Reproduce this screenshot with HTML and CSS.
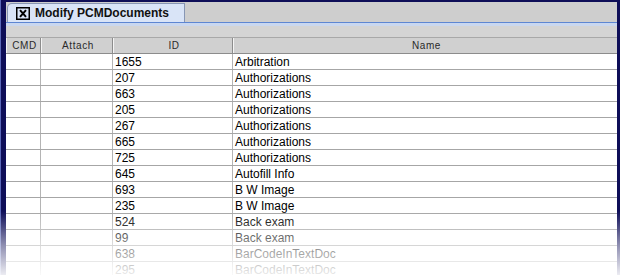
FILE: index.html
```html
<!DOCTYPE html>
<html>
<head>
    <title>Modify PCMDocuments</title>
    <link rel="stylesheet" href="styles.css">
</head>
<body>
    <div class="shot">
        <div class="window">
            <div class="tabstrip">
                <div class="tab">
                    <svg class="close" width="14" height="13" viewBox="0 0 14 13">
                        <rect x="0.75" y="0.75" width="12.5" height="11.5" fill="none" stroke="#000" stroke-width="1.5"/>
                        <path d="M4 3.2 L10 9.8 M10 3.2 L4 9.8" stroke="#000" stroke-width="2"/>
                    </svg>
                    <span>Modify PCMDocuments</span>
                </div>
            </div>
            <div class="tabline"></div>
            <div class="gap"></div>

            <div class="grid">
                <div class="row head">
                    <div class="cell">CMD</div>
                    <div class="cell">Attach</div>
                    <div class="cell">ID</div>
                    <div class="cell">Name</div>
                </div>
                <div id="rows"></div>
            </div>
        </div>
        <div class="fade"></div>
    </div>

    <script>
        const docs = [
            [1655, 'Arbitration'],
            [207, 'Authorizations'],
            [663, 'Authorizations'],
            [205, 'Authorizations'],
            [267, 'Authorizations'],
            [665, 'Authorizations'],
            [725, 'Authorizations'],
            [645, 'Autofill Info'],
            [693, 'B W Image'],
            [235, 'B W Image'],
            [524, 'Back exam'],
            [99, 'Back exam'],
            [638, 'BarCodeInTextDoc'],
            [295, 'BarCodeInTextDoc']
        ];

        const rowsDiv = document.getElementById('rows');
        docs.forEach(([id, name]) => {
            const row = document.createElement('div');
            row.className = 'row';
            row.innerHTML = `
                <div class="cell"></div>
                <div class="cell"></div>
                <div class="cell">${id}</div>
                <div class="cell">${name}</div>
            `;
            rowsDiv.appendChild(row);
        });
    </script>
</body>
</html>
```

FILE: styles.css
```css
body {
    margin: 0;
    background: #fff;
    font-family: "Liberation Sans", Arial, sans-serif;
}
.shot {
    position: relative;
    width: 623px;
    height: 275px;
    overflow: hidden;
    background: #fff;
}
.window {
    margin: 0 3px 0 1px;
    height: 300px;
    border-top: 2px solid #0e0e58;
    border-left: 5px solid #0e0e58;
    border-right: 3px solid #0e0e58;
    box-shadow: -1px 0 0 #5a68b8;
    background: #d4d4d4;
}
.tabstrip {
    height: 20px;
    background: #cecece;
    display: flex;
    align-items: flex-end;
}
.tab {
    margin-left: 1px;
    width: 168px;
    height: 18px;
    background: #d9e4f7;
    border: 1px solid #8796b4;
    border-bottom: none;
    border-top-left-radius: 5px;
    display: flex;
    align-items: center;
    gap: 5px;
    padding-left: 8px;
    box-sizing: content-box;
    font-size: 12px;
    font-weight: bold;
    color: #111;
}
.close {
    display: block;
}
.tabline {
    height: 3px;
    border-top: 1px solid #5d86d2;
    background: #c9d7ef;
}
.gap {
    height: 11px;
    background: #d4d4d4;
}
.grid {
    background: #fff;
}
.row {
    display: grid;
    grid-template-columns: 35px 72px 120px 1fr;
    height: 16px;
    border-bottom: 1px solid #a6a6a6;
    box-sizing: border-box;
}
.row .cell {
    border-right: 1px solid #b4b4b4;
    font-size: 12px;
    line-height: 17px;
    padding-left: 2px;
    color: #000;
    white-space: nowrap;
    overflow: hidden;
}
.row .cell:last-child {
    border-right: none;
}
.head {
    height: 17px;
    background: #d0d0d0;
    border-top: 1px solid #a8a8a8;
    border-bottom: 1px solid #8c8c8c;
}
.head .cell {
    font-size: 10px;
    letter-spacing: 0.6px;
    color: #2a2a2a;
    text-align: center;
    padding-left: 2px;
    line-height: 15px;
    border-right: 1px solid #8c8c8c;
    border-left: 1px solid #f4f4f4;
}
.fade {
    position: absolute;
    left: 0;
    right: 0;
    bottom: 0;
    height: 64px;
    background: linear-gradient(to bottom, rgba(255,255,255,0), rgba(255,255,255,0.55) 55%, rgba(255,255,255,0.92));
}
```
